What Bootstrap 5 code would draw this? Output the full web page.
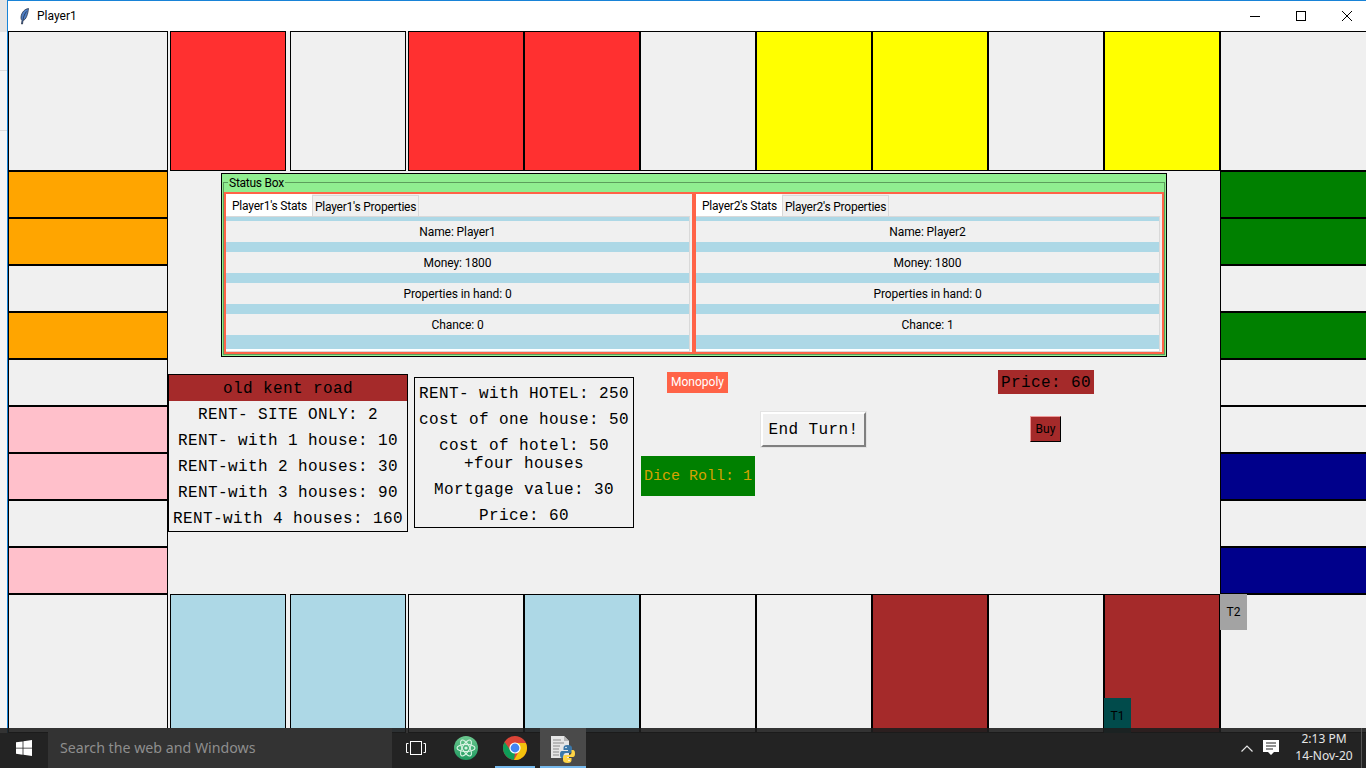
<!DOCTYPE html>
<html lang="en">
<head>
  <meta charset="UTF-8" />
  <meta name="viewport" content="width=device-width, initial-scale=1.0"/>
  <title>Player1</title>
  <link href="https://cdn.jsdelivr.net/npm/bootstrap@5.3.0/dist/css/bootstrap.min.css" rel="stylesheet"/>
  <style>
    html, body { height: 768px; overflow: hidden; }
    body {
      background: linear-gradient(to bottom, #e4e4e4 0 32px, #f5f5f5 32px 70px, #dcdcdc 70px 71px, #f5f5f5 71px 130px, #dcdcdc 130px 131px, #f5f5f5 131px);
      font-family: Roboto, "Noto Sans", sans-serif; font-size: 12px; color: #000;
    }

    .app-window { margin-left: 7px; width: 1359px; height: 768px; border-left: 1px solid #1883d7; border-top: 1px solid #1883d7; overflow: hidden; background: #f0f0f0; }
    .title-bar { height: 30px; background: #fff; padding-left: 12px; }
    .title-text { font-size: 12px; margin-left: 8px; }
    .win-btns { margin-right: -4px; }
    .win-btn { width: 46px; height: 30px; }

    .board-row { display: flex; }
    .top-row { height: 140px; }
    .bottom-row { height: 139px; }
    .tile { border: 1px solid #000; background: #f0f0f0; flex: none; box-sizing: border-box; }
    .tile-wide { width: 116px; }
    .tile-corner { width: 160px; }
    .tile-end { width: 160px; }
    .gap-2px { margin-left: 2px; }
    .gap-4px { margin-left: 4px; }
    .side-col { width: 160px; flex: none; }
    .side-col .tile { width: 100%; height: 47px; }
    .mid-row { height: 423px; }
    .centre { width: 1052px; flex: none; }

    .c-red { background: #ff3030; }
    .c-yellow { background: #ffff00; }
    .c-orange { background: #ffa500; }
    .c-pink { background: #ffc0cb; }
    .c-green { background: #008000; }
    .c-navy { background: #00008b; }
    .c-sky { background: #add8e6; }
    .c-brown { background: #a52a2a; }

    .status-box { margin: 2px 0 0 53px; width: 946px; height: 184px; background: #90ee90; border: 1px solid #000; padding: 8px 1px 1px 1px; position: relative; }
    .status-line { border: 1px solid #5c9e5c; height: 173px; padding-top: 9px; }
    .status-legend { position: absolute; left: 6px; top: 1px; background: #90ee90; padding: 0 1px; line-height: 16px; font-size: 12px; letter-spacing: -.25px; }
    .status-inner { height: 162px; display: flex; background: #f0f0f0; }
    .player-pane { flex: none; width: 470px; height: 162px; border: 2px solid #ff6347; }
    .tab-strip { height: 22px; flex-wrap: nowrap; border: 0; align-items: flex-end; }
    .tab-strip .nav-link { font-size: 12px; letter-spacing: -.22px; color: #000; padding: 0 2px; border: 1px solid #d9d9d9; border-bottom: 0; border-radius: 0; background: #f0f0f0; height: 21px; line-height: 23px; margin: 0; }
    .tab-strip .nav-link.active { background: #fff; border-color: #fff; height: 22px; line-height: 22px; padding: 0 4px 0 5px; }
    .tab-body { border: 1px solid #d9d9d9; border-left: 0; width: 464px; height: 136px; background: #fff; padding-bottom: 2px; }
    .stripe { background: #add8e6; height: 10px; }
    .stripe-first { height: 4px; }
    .stripe-last { height: 14px; }
    .stat-line { background: #f0f0f0; height: 21px; line-height: 23px; text-align: center; letter-spacing: -.08px; }

    .lower-area { padding-top: 2px; }
    .mono { font-family: "Liberation Mono", monospace; font-size: 16px; letter-spacing: .4px; color: #000; }
    .rent-card { width: 240px; height: 158px; margin-top: 15px; border: 1px solid #000; text-align: center; flex: none; }
    .rent-head { background: #a52a2a; height: 26px; line-height: 28px; }
    .rent-line { height: 26px; line-height: 28px; white-space: nowrap; }
    .rent-card-b { width: 220px; height: 151px; margin: 18px 0 0 6px; padding-top: 2px; }
    .rent-two { line-height: 18px; height: 44px; padding-top: 5px; }
    .mid-stack { width: 114px; margin-left: 7px; flex: none; }
    .logo-tag { display: block; width: 61px; height: 21px; line-height: 21px; margin: 13px 0 0 26px; background: #ff6347; color: #fff; text-align: center; font-size: 12px; }
    .dice-tag { height: 40px; line-height: 41px; margin-top: 63px; background: #008000; color: #d4a300; text-align: center; font-size: 15px; letter-spacing: 0; white-space: nowrap; }
    .end-btn { margin: 53px 0 0 6px; width: 105px; height: 35px; padding: 0; border-radius: 0; background: #f0f0f0; color: #000; border: 2px solid; border-color: #fff #808080 #808080 #fff; box-shadow: 0 0 0 1px #e3e3e3; }
    .price-stack { margin: 11px 0 0 132px; width: 96px; flex: none; }
    .price-tag { background: #a52a2a; height: 24px; line-height: 26px; text-align: center; }
    .buy-btn { display: block; margin: 22px 0 0 32px; width: 31px; height: 26px; padding: 0; border-radius: 0; background: #a52a2a; color: #000; font-size: 12px; border: 1px solid; border-color: #e99 #000 #000 #e99; }

    .token { position: absolute; width: 27px; text-align: center; font-size: 12px; }
    .token-one { left: 1104px; top: 698px; height: 35px; background: #014b4b; line-height: 37px; }
    .token-two { left: 1220px; top: 594px; height: 36px; background: #a3a3a3; line-height: 36px; }

    .task-bar { position: absolute; left: 0; right: 0; bottom: 0; height: 40px; background: rgba(30, 30, 30, .9); }
    .task-fill { position: absolute; left: 0; right: 0; bottom: 0; height: 35px; background: #232323; }
    .task-items { position: relative; height: 40px; font-family: "Noto Sans", sans-serif; }
    .start-slot { width: 48px; padding-left: 16px; }
    .search-slot { width: 344px; height: 40px; background: #333; padding-left: 12px; color: #8e8e8e; font-size: 14.2px; line-height: 40px; }
    .task-slot { width: 48px; height: 40px; position: relative; flex: none; }
    .slot-atom { width: 52px; }
    .slot-chrome { width: 46px; }
    .slot-python { width: 46px; margin-left: 2px; background: #4a4a4a; }
    .py-icon { margin-top: 3px; }
    .task-under { position: absolute; left: 0; right: 0; bottom: 0; height: 2px; background: #76b9ed; }
    .slot-chrome .task-under { left: 3px; right: 3px; }
    .clock-text { color: #e6e6e6; font-size: 12px; line-height: 17px; text-align: center; width: 68px; margin: -2px 0 0 11px; }
    .tray { margin-left: auto; padding-right: 8px; }
    .tray-bell { margin-left: 10px; }
    .tray-sep { position: absolute; right: 4px; top: 0; bottom: 0; width: 1px; background: #555; }
  </style>
</head>
<body>

  <div class="app-window">
    <!-- title bar -->
    <div class="title-bar d-flex align-items-center justify-content-between">
      <div class="d-flex align-items-center">
        <svg width="9" height="17" viewBox="0 0 9 17">
          <path d="M8.500.5C5 1 1.500 4 1 9c-.2 2 .5 3 1 3.500L1.500 16h1L3 12.500C6 12 8 6 8.500.5z" fill="#4f7fc4" stroke="#1a2338" stroke-width=".7"/>
          <path d="M6.500 3.500C5 5.500 3.500 8 3 12" stroke="#1a2338" stroke-width=".7" fill="none"/>
        </svg>
        <span class="title-text">Player1</span>
      </div>
      <div class="win-btns d-flex">
        <div class="win-btn d-flex align-items-center justify-content-center">
          <svg width="10" height="10" viewBox="0 0 10 10"><path d="M0 5.500h10" stroke="#000"/></svg>
        </div>
        <div class="win-btn d-flex align-items-center justify-content-center">
          <svg width="10" height="10" viewBox="0 0 10 10"><rect x=".5" y=".5" width="9" height="9" fill="none" stroke="#000"/></svg>
        </div>
        <div class="win-btn d-flex align-items-center justify-content-center">
          <svg width="10" height="10" viewBox="0 0 10 10"><path d="M0 0l10 10M10 0L0 10" stroke="#000"/></svg>
        </div>
      </div>
    </div>

    <!-- top row of the board -->
    <div class="board-row top-row">
      <div class="tile tile-corner"></div>
      <div class="tile tile-wide gap-2px c-red"></div>
      <div class="tile tile-wide gap-4px"></div>
      <div class="tile tile-wide gap-2px c-red"></div>
      <div class="tile tile-wide c-red"></div>
      <div class="tile tile-wide"></div>
      <div class="tile tile-wide c-yellow"></div>
      <div class="tile tile-wide c-yellow"></div>
      <div class="tile tile-wide"></div>
      <div class="tile tile-wide c-yellow"></div>
      <div class="tile tile-end"></div>
    </div>

    <div class="board-row mid-row">
      <div class="side-col">
        <div class="tile c-orange"></div>
        <div class="tile c-orange"></div>
        <div class="tile"></div>
        <div class="tile c-orange"></div>
        <div class="tile"></div>
        <div class="tile c-pink"></div>
        <div class="tile c-pink"></div>
        <div class="tile"></div>
        <div class="tile c-pink"></div>
      </div>

      <div class="centre">
        <div class="status-box">
          <div class="status-legend">Status Box</div>
          <div class="status-line">
            <div class="status-inner">
              <div class="player-pane">
                <ul class="nav tab-strip">
                  <li class="nav-item"><a class="nav-link active" href="#">Player1's Stats</a></li>
                  <li class="nav-item"><a class="nav-link" href="#">Player1's Properties</a></li>
                </ul>
                <div class="tab-body">
                  <div class="stripe stripe-first"></div>
                  <div class="stat-line">Name: Player1</div>
                  <div class="stripe"></div>
                  <div class="stat-line">Money: 1800</div>
                  <div class="stripe"></div>
                  <div class="stat-line">Properties in hand: 0</div>
                  <div class="stripe"></div>
                  <div class="stat-line">Chance: 0</div>
                  <div class="stripe stripe-last"></div>
                </div>
              </div>
              <div class="player-pane">
                <ul class="nav tab-strip">
                  <li class="nav-item"><a class="nav-link active" href="#">Player2's Stats</a></li>
                  <li class="nav-item"><a class="nav-link" href="#">Player2's Properties</a></li>
                </ul>
                <div class="tab-body">
                  <div class="stripe stripe-first"></div>
                  <div class="stat-line">Name: Player2</div>
                  <div class="stripe"></div>
                  <div class="stat-line">Money: 1800</div>
                  <div class="stripe"></div>
                  <div class="stat-line">Properties in hand: 0</div>
                  <div class="stripe"></div>
                  <div class="stat-line">Chance: 1</div>
                  <div class="stripe stripe-last"></div>
                </div>
              </div>
            </div>
          </div>
        </div>

        <div class="lower-area d-flex align-items-start">
          <div class="rent-card mono">
            <div class="rent-head">old kent road</div>
            <div class="rent-line">RENT- SITE ONLY: 2</div>
            <div class="rent-line">RENT- with 1 house: 10</div>
            <div class="rent-line">RENT-with 2 houses: 30</div>
            <div class="rent-line">RENT-with 3 houses: 90</div>
            <div class="rent-line">RENT-with 4 houses: 160</div>
          </div>
          <div class="rent-card rent-card-b mono">
            <div class="rent-line">RENT- with HOTEL: 250</div>
            <div class="rent-line">cost of one house: 50</div>
            <div class="rent-two">cost of hotel: 50<br>+four houses</div>
            <div class="rent-line">Mortgage value: 30</div>
            <div class="rent-line">Price: 60</div>
          </div>
          <div class="mid-stack">
            <span class="logo-tag">Monopoly</span>
            <div class="dice-tag mono">Dice Roll: 1</div>
          </div>
          <button class="btn end-btn mono" type="button">End Turn!</button>
          <div class="price-stack">
            <div class="price-tag mono">Price: 60</div>
            <button class="btn buy-btn" type="button">Buy</button>
          </div>
        </div>
      </div>

      <div class="side-col">
        <div class="tile c-green"></div>
        <div class="tile c-green"></div>
        <div class="tile"></div>
        <div class="tile c-green"></div>
        <div class="tile"></div>
        <div class="tile"></div>
        <div class="tile c-navy"></div>
        <div class="tile"></div>
        <div class="tile c-navy"></div>
      </div>
    </div>

    <!-- bottom row of the board -->
    <div class="board-row bottom-row">
      <div class="tile tile-corner"></div>
      <div class="tile tile-wide gap-2px c-sky"></div>
      <div class="tile tile-wide gap-4px c-sky"></div>
      <div class="tile tile-wide gap-2px"></div>
      <div class="tile tile-wide c-sky"></div>
      <div class="tile tile-wide"></div>
      <div class="tile tile-wide"></div>
      <div class="tile tile-wide c-brown"></div>
      <div class="tile tile-wide"></div>
      <div class="tile tile-wide c-brown"></div>
      <div class="tile tile-end"></div>
    </div>
  </div>

  <div class="token token-one">T1</div>
  <div class="token token-two">T2</div>

  <!-- windows taskbar lies over the bottom of the window -->
  <div class="task-bar">
    <div class="task-fill"></div>
    <div class="task-items d-flex align-items-center">
      <div class="start-slot d-flex">
        <svg width="16" height="16" viewBox="0 0 16 16" fill="#fff">
          <path d="M0 2.300l6.600-.9v6.300H0zM7.400 1.300L16 0v7.700H7.400zM0 8.400h6.600v6.300L0 13.800zM7.400 8.400H16V16l-8.600-1.200z"/>
        </svg>
      </div>
      <div class="search-slot">Search the web and Windows</div>
      <div class="task-slot d-flex align-items-center justify-content-center">
        <svg width="20" height="14" viewBox="0 0 20 14" fill="none" stroke="#fff">
          <rect x="4.500" y=".5" width="11" height="13"/>
          <path d="M2.500 2.500H.5v9h2M17.500 2.500h2v9h-2"/>
        </svg>
      </div>
      <div class="task-slot slot-atom d-flex align-items-center justify-content-center">
        <svg width="24" height="24" viewBox="0 0 24 24">
          <defs>
            <linearGradient id="atomFill" x1="0" y1="0" x2="0" y2="1">
              <stop offset="0" stop-color="#6cc78f"/>
              <stop offset="1" stop-color="#1f9a60"/>
            </linearGradient>
          </defs>
          <circle cx="12" cy="12" r="12" fill="url(#atomFill)"/>
          <g fill="none" stroke="#d8f3e3" stroke-width="1.100">
            <ellipse cx="12" cy="12" rx="9" ry="3.600"/>
            <ellipse cx="12" cy="12" rx="9" ry="3.600" transform="rotate(60 12 12)"/>
            <ellipse cx="12" cy="12" rx="9" ry="3.600" transform="rotate(120 12 12)"/>
          </g>
          <circle cx="12" cy="12" r="1.600" fill="#d8f3e3"/>
        </svg>
      </div>
      <div class="task-slot slot-chrome d-flex align-items-center justify-content-center">
        <svg width="24" height="24" viewBox="0 0 24 24">
          <circle cx="12" cy="12" r="12" fill="#db4437"/>
          <path d="M1.600 6L7.600 14.600 12 17 11 24A12 12 0 0 1 1.600 6z" fill="#0f9d58"/>
          <path d="M12 7H22.900A12 12 0 0 1 11 24L16.400 14.500z" fill="#f4c20d"/>
          <circle cx="12" cy="12" r="5.600" fill="#fff"/>
          <circle cx="12" cy="12" r="4.400" fill="#4285f4"/>
        </svg>
        <div class="task-under"></div>
      </div>
      <div class="task-slot slot-python d-flex align-items-center justify-content-center">
        <svg class="py-icon" width="24" height="27" viewBox="0 0 24 27">
          <path d="M0 0h13l5 5v17H0z" fill="#e6e6e6"/>
          <path d="M13 0v5h5z" fill="#b5b5b5"/>
          <path d="M2 4h8M2 7h11M2 10h7M2 13h6M2 16h6M2 19h6" stroke="#8a8a8a"/>
          <path d="M16.500 9c-3 0-4 1-4 3v2h4.500v1h-6c-1.500 0-2 1.500-2 3.500s.5 3.500 2 3.500h1.500v-2.500c0-1.500 1-2.500 2.500-2.500h4c1 0 2-1 2-2V12c0-2-1.500-3-4.500-3z" fill="#3b77a8"/>
          <path d="M16.500 9c-3 0-4 1-4 3v2h4.500v1h-6c-1.500 0-2 1.500-2 3.500s.5 3.500 2 3.500h1.500v-2.500c0-1.500 1-2.500 2.500-2.500h4c1 0 2-1 2-2V12c0-2-1.500-3-4.500-3z" fill="#ffd445" transform="rotate(180 16.500 18)"/>
          <circle cx="15" cy="11.500" r=".8" fill="#fff"/>
          <circle cx="18" cy="24.500" r=".8" fill="#fff"/>
        </svg>
        <div class="task-under"></div>
      </div>
      <div class="tray d-flex align-items-center">
        <svg width="12" height="7" viewBox="0 0 12 7" fill="none" stroke="#e6e6e6" stroke-width="1.200"><path d="M.5 6.500l5.500-5.500 5.500 5.500"/></svg>
        <svg class="tray-bell" width="16" height="16" viewBox="0 0 16 16">
          <path d="M0 0h16v12h-5l-3 3-3-3H0z" fill="#fff"/>
          <path d="M3 3h10M3 6h10M3 9h7" stroke="#232323"/>
        </svg>
        <div class="clock-text">2:13 PM<br>14-Nov-20</div>
      </div>
    </div>
    <div class="tray-sep"></div>
  </div>

</body>
</html>
